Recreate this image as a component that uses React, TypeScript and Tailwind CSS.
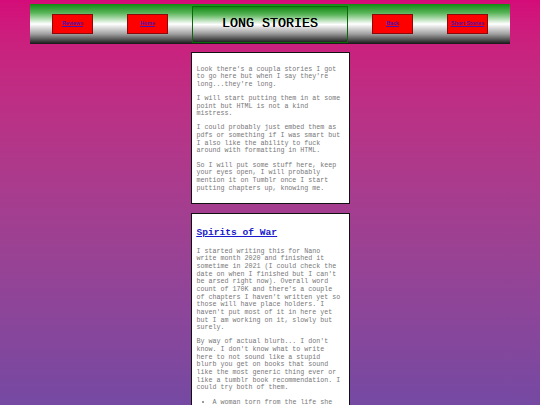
export default function App() {
  return (
    <div className="min-h-screen bg-fixed bg-linear-to-b from-[#d40b79] to-[#7549a2] pt-[4px] pb-6 font-['Liberation_Mono',monospace]">
      {/* header bar */}
      <header className="mx-[30px] flex h-[40px] items-center bg-[linear-gradient(to_bottom,#128a12_0%,#58b458_22%,#ffffff_50%,#a0a0a0_75%,#161616_100%)] pl-[22px] pr-[22px]">
        <NavButton label="Reviews" />
        <NavButton label="Home" className="ml-[34px]" />
        <div className="ml-[24px] flex h-[37px] w-[156px] items-center justify-center border border-[#0a6a0a] bg-[linear-gradient(to_bottom,#128a12_0%,#58b458_22%,#ffffff_50%,#a0a0a0_75%,#222222_100%)]">
          <h1 className="text-[13.3px] leading-none text-black [text-shadow:0_0_0.4px_#000]">LONG STORIES</h1>
        </div>
        <NavButton label="Back" className="ml-[24px]" />
        <NavButton label="Short Stories" className="ml-[34px]" />
      </header>

      <Card className="mt-[8px]">
        <p>Look there's a coupla stories I got to go here but when I say they're long...they're long.</p>
        <p>I will start putting them in at some point but HTML is not a kind mistress.</p>
        <p>
          I could probably just embed them as pdfs or something if I was smart but I also like the ability to fuck
          around with formatting in HTML.
        </p>
        <p>
          So I will put some stuff here, keep your eyes open, I will probably mention it on Tumblr once I start
          putting chapters up, knowing me.
        </p>
      </Card>

      <Card className="mt-[9px]">
        <h2 className="mt-[7px] mb-[10px] text-[9.6px] leading-[11px] font-bold text-[#1a1acc] underline">
          <a href="#">Spirits of War</a>
        </h2>
        <p>
          I started writing this for Nano write month 2020 and finished it sometime in 2021 (I could check the date on
          when I finished but I can't be arsed right now). Overall word count of 170K and there's a couple of chapters
          I haven't written yet so those will have place holders. I haven't put most of it in here yet but I am
          working on it, slowly but surely.
        </p>
        <p>
          By way of actual blurb... I don't know. I don't know what to write here to not sound like a stupid blurb you
          get on books that sound like the most generic thing ever or like a tumblr book recommendation. I could try
          both of them.
        </p>
        <ul className="my-[7px] list-disc pl-[16px]">
          <li>A woman torn from the life she knew, a war that was never hers to fight.</li>
          <li>Ghosts, soldiers and the things in between.</li>
        </ul>
      </Card>
    </div>
  )
}

function NavButton({ label, className = '' }: { label: string; className?: string }) {
  return (
    <div
      className={`flex h-[20px] w-[41px] shrink-0 items-center justify-center border border-[#8a0a0a] bg-[#ff0000] ${className}`}
    >
      <a href="#" className="font-['Liberation_Sans',Arial,sans-serif] text-[5.3px] leading-none font-bold text-[#4a12b0] underline">
        {label}
      </a>
    </div>
  )
}

function Card({ children, className = '' }: { children: React.ReactNode; className?: string }) {
  return (
    <section
      className={`mx-auto w-[159px] border-[1.5px] border-[#111] bg-white px-[5px] pt-[6px] pb-[4px] text-[6.67px] leading-[7.65px] text-[#787878] [&>p]:my-[6.5px] ${className}`}
    >
      {children}
    </section>
  )
}
